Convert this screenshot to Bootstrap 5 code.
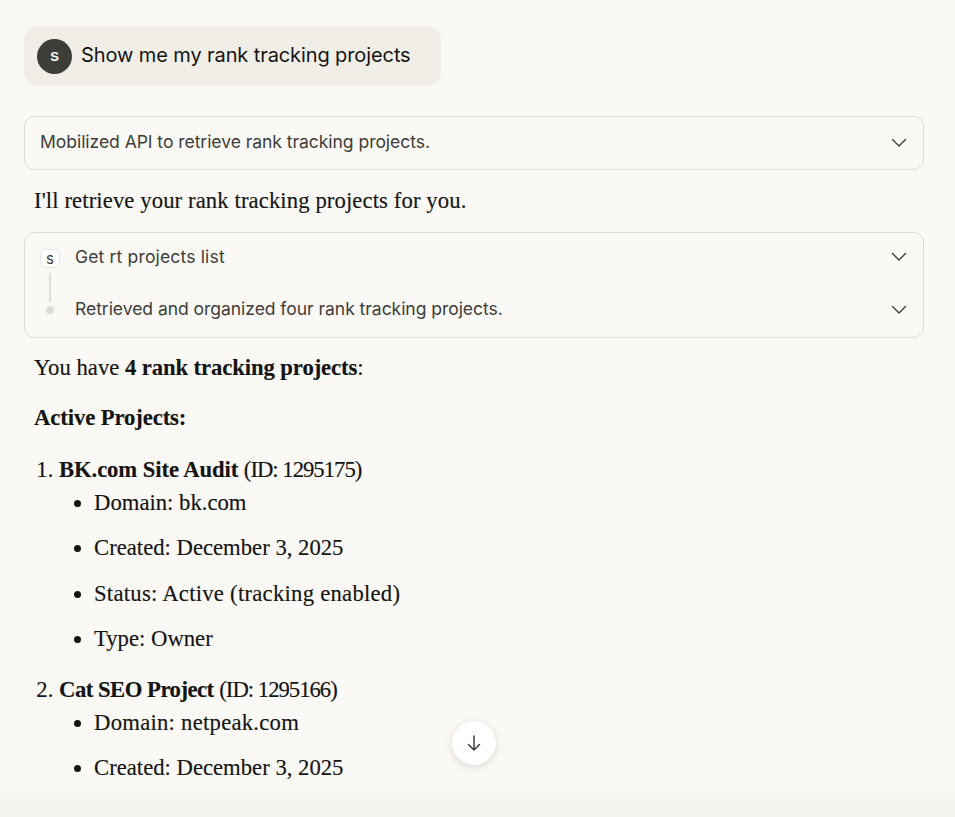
<!DOCTYPE html>
<html lang="en"><head><meta charset="utf-8">
<title>Chat</title>
<link href="https://cdn.jsdelivr.net/npm/bootstrap@5.3.0/dist/css/bootstrap.min.css" rel="stylesheet">
<style>
html,body{height:817px;overflow:hidden;background:#faf9f5;}
body{position:relative;color:#141413;font-family:"Liberation Serif",serif;}
.chat-col{padding:26px 31px 0 24px;}
.user-bubble{height:60px;width:417px;background:#f0eee6;border-radius:14px;padding-left:13px;gap:9px;margin-bottom:30px;}
.user-av{width:35px;height:35px;background:#3d3d3a;color:#fff;border-radius:50%;font:700 13px "Liberation Sans",sans-serif;}
.user-text{font:400 20px/1 "Inter",sans-serif;letter-spacing:-.1px;margin-top:-3px;}
.tool-box{border:1px solid #dedcd4;border-radius:10px;color:#3d3d3a;font:400 17.55px/1 "Inter",sans-serif;letter-spacing:-.05px;}
.tool-one{height:54px;padding:0 16px 0 15px;}
.tool-one span{margin-top:-3px;}
.tool-two{height:106px;padding:0 16px 0 15px;}
.tool-two span{margin-top:-2px;}
.row-a{height:49px;}
.row-a span{letter-spacing:.15px;}
.row-a .chev{margin-top:-2px;}
.row-b{height:55px;}
.chev{width:16px;height:16px;flex:none;fill:none;stroke:#3d3d3a;stroke-width:1.4;stroke-linecap:round;stroke-linejoin:round;}
.step-marks{width:20px;margin-right:15px;}
.s-chip{width:20px;height:19px;background:#fff;border:1px solid #e8e6de;border-radius:5px;font:400 15px/1 "Inter",sans-serif;color:#3d3d3a;}
.s-line{width:2px;height:29px;background:#dedcd4;margin:5px 0 4px;}
.s-dot{width:8px;height:8px;border-radius:50%;background:#dedcd4;}
.prose{font-size:22.7px;line-height:30px;padding-left:10px;-webkit-text-stroke:.15px #141413;}
.prose p{margin:0;}
.prose b{font-weight:700;letter-spacing:-.1px;}
.prose b.tight{letter-spacing:-.5px;}
.prose .loose{letter-spacing:.25px;}
.prose .digits{letter-spacing:-1px;}
.prose .intro{margin:16px 0;letter-spacing:.1px;}
.prose .have{margin:15px 0 20px;}
.prose .head{margin:0 0 22px;}
.prose ol{margin:0;padding-left:25px;}
.prose ol>li{margin-bottom:21px;}
.prose ul{margin:3px 0 0;padding-left:35px;list-style:disc;}
.prose ul li{margin-bottom:15.3px;}
.prose ul li:last-child{margin-bottom:0;}
.scroll-btn{position:absolute;left:452px;top:721px;width:44px;height:44px;background:#fff;border-radius:50%;box-shadow:0 2px 8px rgba(0,0,0,.13);z-index:3;}
.bottom-fade{position:absolute;left:0;right:0;bottom:0;height:34px;background:linear-gradient(#faf9f500,#f5f4ef 60%);z-index:2;}
</style></head>
<body>
<div class="chat-col">
  <div class="user-bubble d-flex align-items-center">
    <div class="user-av d-flex align-items-center justify-content-center">S</div>
    <div class="user-text">Show me my rank tracking projects</div>
  </div>
  <div class="tool-box tool-one d-flex align-items-center justify-content-between">
    <span>Mobilized API to retrieve rank tracking projects.</span>
    <svg class="chev" viewBox="0 0 16 16"><path d="M1.5 4.5L8 11l6.5-6.5"/></svg>
  </div>
  <div class="prose"><p class="intro">I'll retrieve your rank tracking projects for you.</p></div>
  <div class="tool-box tool-two d-flex">
    <div class="step-marks d-flex flex-column align-items-center pt-3">
      <div class="s-chip d-flex align-items-center justify-content-center">s</div>
      <div class="s-line"></div>
      <div class="s-dot"></div>
    </div>
    <div class="flex-grow-1">
      <div class="row-a d-flex align-items-center justify-content-between"><span>Get rt projects list</span><svg class="chev" viewBox="0 0 16 16"><path d="M1.5 4.5L8 11l6.5-6.5"/></svg></div>
      <div class="row-b d-flex align-items-center justify-content-between"><span>Retrieved and organized four rank tracking projects.</span><svg class="chev" viewBox="0 0 16 16"><path d="M1.5 4.5L8 11l6.5-6.5"/></svg></div>
    </div>
  </div>
  <div class="prose">
    <p class="have">You have <b>4 rank tracking projects</b>:</p>
    <p class="head"><b>Active Projects:</b></p>
    <ol>
      <li><b>BK.com Site Audit</b> <span class="digits">(ID: 1295175)</span>
        <ul><li>Domain: bk.com</li><li>Created: December 3, 2025</li><li class="loose">Status: Active (tracking enabled)</li><li>Type: Owner</li></ul>
      </li>
      <li><b class="tight">Cat SEO Project</b> <span class="digits">(ID: 1295166)</span>
        <ul><li class="loose">Domain: netpeak.com</li><li>Created: December 3, 2025</li></ul>
      </li>
    </ol>
  </div>
</div>
<div class="bottom-fade"></div>
<div class="scroll-btn d-flex align-items-center justify-content-center">
  <svg width="20" height="20" viewBox="0 0 20 20" fill="none" stroke="#3d3d3a" stroke-width="1.5" stroke-linecap="round" stroke-linejoin="round"><path d="M10 3v14M4.5 11.5L10 17l5.5-5.5"/></svg>
</div>
<script src="https://cdn.jsdelivr.net/npm/bootstrap@5.3.0/dist/js/bootstrap.bundle.min.js"></script>
</body></html>
